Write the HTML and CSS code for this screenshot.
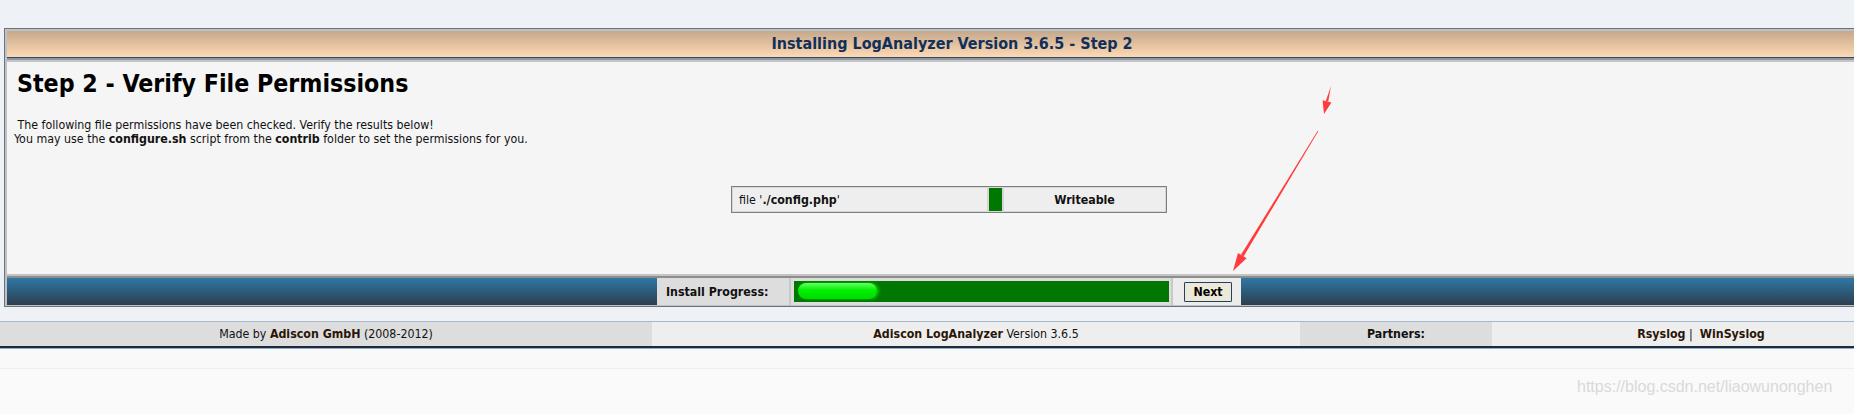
FILE: index.html
```html
<!DOCTYPE html>
<html lang="en">
<head>
  <meta charset="UTF-8" />
  <title>Installing LogAnalyzer Version 3.6.5 - Step 2</title>
  <link rel="stylesheet" href="styles.css">
</head>
<body>
  <div class="install-box">
    <div class="title-bar">Installing LogAnalyzer Version 3.6.5 - Step 2</div>
    <div class="title-sep"></div>

    <div class="content">
      <h1>Step 2 - Verify File Permissions</h1>
      <p class="intro">
        &nbsp;The following file permissions have been checked. Verify the results below!<br>
        You may use the <b>configure.sh</b> script from the <b>contrib</b> folder to set the permissions for you.
      </p>

      <div class="perm-table">
        <div class="perm-cell perm-file"><span>file '<b>./config.php</b>'</span></div>
        <div class="perm-cell perm-state"></div>
        <div class="perm-cell perm-result">Writeable</div>
      </div>
    </div>

    <div class="content-sep"></div>

    <div class="progress-row">
      <div class="progress-table">
        <div class="p-cell p-label">Install Progress:</div>
        <div class="p-cell p-bar">
          <div class="bar-track">
            <div class="bar-fill"></div>
          </div>
        </div>
        <div class="p-cell p-next">
          <button type="button" class="next-btn">Next</button>
        </div>
      </div>
    </div>
  </div>

  <div class="footer">
    <div class="f-cell f-made">Made by <a href="#">Adiscon GmbH</a> (2008-2012)</div>
    <div class="f-cell f-product"><a href="#">Adiscon LogAnalyzer</a> Version 3.6.5</div>
    <div class="f-cell f-partners-label">Partners:</div>
    <div class="f-cell f-partners"><a href="#">Rsyslog</a> | &nbsp;<a href="#">WinSyslog</a></div>
  </div>

  <div class="below"></div>

  <!-- red annotation arrows drawn over the page -->
  <svg class="annotations" width="1854" height="414" viewBox="0 0 1854 414">
    <polygon fill="#ff3b3b" points="1331,86 1328.2,101.7 1325.8,101.1" />
    <polygon fill="#ff3b3b" points="1331.4,102.5 1324,114 1322.6,100.3" />
    <polygon fill="#ff3b3b" points="1318.3,131.2 1243.6,256.4 1241,254.8 1317.7,130.8" />
    <polygon fill="#ff3b3b" points="1246.6,258.2 1233,271 1238,253" />
  </svg>

  <div class="watermark">https://blog.csdn.net/liaowunonghen</div>
</body>
</html>
```

FILE: styles.css
```css
:root {
  --page-bg: #eef1f5;
  --panel-bg: #f5f5f5;
  --cell-dark: #dddddd;
  --cell-light: #eeeeee;
  --green: #007700;
  --navy: #10305a;
  --text: #111111;
  --link: #2a1608;
  --font: "DejaVu Sans Condensed", "DejaVu Sans", sans-serif;
}

* {
  box-sizing: border-box;
}

html,
body {
  overflow: hidden;
}

body {
  margin: 0;
  height: 414px;
  background: var(--page-bg);
  font-family: var(--font);
  font-size: 12.3px;
  color: var(--text);
  position: relative;
}

.install-box {
  margin: 28px 0 0 4px;
  width: 1894px;
  border: 1px solid #6d7378;
  padding: 2px 0 1px 2px;
  background: #bcc2c8;
}

.title-bar {
  height: 26px;
  line-height: 26px;
  text-align: center;
  font-size: 16px;
  font-weight: bold;
  color: var(--navy);
  background: linear-gradient(#c6a88b, #fdd9b4);
}

.title-sep {
  height: 5px;
  border-top: 1px solid #33495f;
  border-bottom: 2px solid #c4c6c8;
  background: #8e979f;
}

.content {
  height: 212px;
  background: var(--panel-bg);
  padding: 8px 0 0 10px;
}

.content h1 {
  margin: 0;
  font-size: 24.7px;
  line-height: 28px;
  font-weight: bold;
  color: #000;
}

.intro {
  margin: 20px 0 0 -3px;
  line-height: 14px;
}

.perm-table {
  display: flex;
  gap: 2px;
  width: 436px;
  height: 27px;
  margin: 40px 0 0 714px;
  padding: 1px;
  border: 1px solid #7f7f7f;
  background: #d6d6d6;
}

.perm-cell {
  display: flex;
  align-items: center;
  background: var(--cell-light);
}

.perm-file {
  width: 254px;
  padding-left: 6px;
}

.perm-state {
  width: 13px;
  background: var(--green);
}

.perm-result {
  flex: 1;
  justify-content: center;
  font-weight: bold;
}

.content-sep {
  height: 4px;
  border-top: 2px solid #c4c4c4;
  background: #8d8d8d;
}

.progress-row {
  height: 27px;
  background: linear-gradient(#2f78a5, #2c3e4d);
  display: flex;
  justify-content: center;
}

.progress-table {
  display: flex;
  gap: 2px;
  background: #c8c8c8;
  margin-left: -6px;
}

.p-cell {
  display: flex;
  align-items: center;
  background: var(--cell-dark);
}

.p-label {
  width: 132px;
  padding-left: 9px;
  font-weight: bold;
}

.p-bar {
  width: 380px;
  padding: 0 2px 0 3px;
}

.bar-track {
  width: 100%;
  height: 21px;
  background: var(--green);
  padding: 2px 0 0 4px;
}

.bar-fill {
  width: 79px;
  height: 16px;
  border-radius: 8px;
  background: linear-gradient(#66ff66, #00ee00 45%, #00dd00);
  box-shadow: 2px 0 3px #00cc00;
}

.p-cell.p-next {
  width: 68px;
  padding-left: 11px;
  background: #ececec;
}

.next-btn {
  width: 48px;
  height: 20px;
  padding: 0;
  font-family: var(--font);
  font-size: 12.3px;
  font-weight: bold;
  color: #000;
  background: #ece9d8;
  border: 1px solid #24405f;
  border-radius: 1px;
}

.footer {
  display: flex;
  width: 1910px;
  height: 27px;
  margin-top: 14px;
  border-top: 1px solid #a8b9ca;
  border-bottom: 2px solid #1d2c3c;
  box-shadow: 0 1px 0 #93abc3;
}

.f-cell {
  line-height: 24px;
  text-align: center;
  background: var(--cell-light);
}

.f-cell a {
  color: var(--link);
  font-weight: bold;
  text-decoration: none;
}

.f-made {
  width: 652px;
  background: var(--cell-dark);
}

.f-product {
  width: 648px;
}

.f-partners-label {
  width: 192px;
  font-weight: bold;
  background: var(--cell-dark);
}

.f-partners {
  width: 418px;
}

.below {
  height: 80px;
  margin-top: 1px;
  background: linear-gradient(#f9f9f9 19px, #efefef 19px, #efefef 20px, #fafafa 20px);
}

.annotations {
  position: absolute;
  top: 0;
  left: 0;
  pointer-events: none;
}

.watermark {
  position: absolute;
  left: 1577px;
  top: 378px;
  font-family: "Liberation Sans", Arial, sans-serif;
  font-size: 16px;
  color: #d9d9d9;
}
```
